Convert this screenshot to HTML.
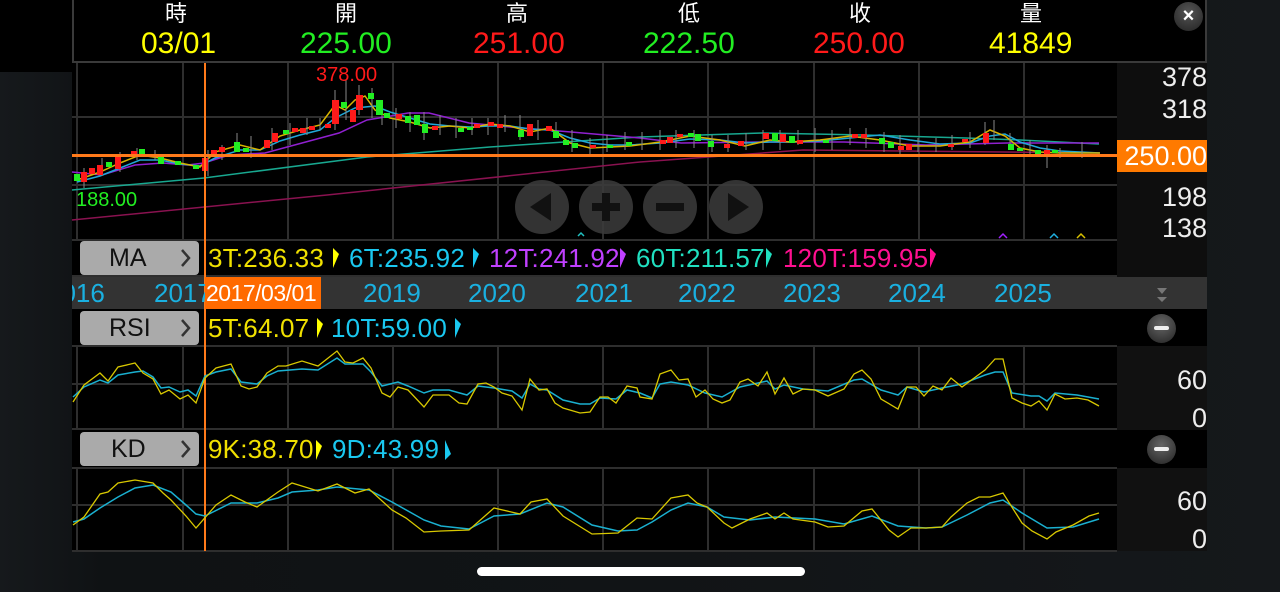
<!DOCTYPE html>
<html><head><meta charset="utf-8"><style>
*{margin:0;padding:0;box-sizing:border-box}
body{width:1280px;height:592px;overflow:hidden;background:#131619;font-family:"Liberation Sans","Noto Sans CJK TC",sans-serif;position:relative}
.abs{position:absolute}
.t{position:absolute;white-space:nowrap;line-height:1}
.l{font-size:26px;letter-spacing:0.2px;top:245px}
.d{font-size:26px;top:3px;color:#1ab0e0}
.ax{right:73px;font-size:27px;color:#eee}
</style></head><body>
<div class="abs" style="left:0;top:0;width:1280px;height:592px;background:linear-gradient(90deg,#16191c 0%,#0f1214 8%,#111416 50%,#15181b 100%)"></div>
<div class="abs" style="left:0;top:0;width:72px;height:72px;background:#000"></div>
<div class="abs" style="left:72px;top:0;width:1135px;height:551px;background:#000"></div>
<div class="abs" style="left:72px;top:0;width:1135px;height:63px;border:2px solid #3a3a3a;border-top:none"></div>
<div class="t" style="left:165px;top:3px;font-size:22px;color:#fff">時</div>
<div class="t" style="left:335px;top:3px;font-size:22px;color:#fff">開</div>
<div class="t" style="left:506px;top:3px;font-size:22px;color:#fff">高</div>
<div class="t" style="left:678px;top:3px;font-size:22px;color:#fff">低</div>
<div class="t" style="left:849px;top:3px;font-size:22px;color:#fff">收</div>
<div class="t" style="left:1020px;top:3px;font-size:22px;color:#fff">量</div>
<div class="t" style="left:141px;top:29px;font-size:30px;color:#ffff00">03/01</div>
<div class="t" style="left:300px;top:29px;font-size:30px;color:#22ee22">225.00</div>
<div class="t" style="left:473px;top:29px;font-size:30px;color:#ff1a1a">251.00</div>
<div class="t" style="left:643px;top:29px;font-size:30px;color:#22ee22">222.50</div>
<div class="t" style="left:813px;top:29px;font-size:30px;color:#ff1a1a">250.00</div>
<div class="t" style="left:989px;top:29px;font-size:30px;color:#ffff00">41849</div>
<div class="abs" style="left:1174px;top:2px;width:29px;height:29px;border-radius:50%;background:radial-gradient(circle at 50% 35%,#555,#222);color:#fff;font-size:20px;font-weight:bold;text-align:center;line-height:28px">×</div>

<div class="abs" style="left:1117px;top:63px;width:90px;height:214px;background:#0e0e0e"></div>
<div class="abs" style="left:1117px;top:346px;width:90px;height:84px;background:#111"></div>
<div class="abs" style="left:1117px;top:468px;width:90px;height:83px;background:#111"></div>
<div class="abs" style="left:72px;top:277px;width:1135px;height:32px;background:#333"></div>

<svg class="abs" style="left:0;top:0" width="1280" height="592">
<g stroke="#2e2e2e" stroke-width="2" fill="none">
<path d="M77 63V240M183 63V240M288 63V240M393 63V240M498 63V240M603 63V240M708 63V240M814 63V240M919 63V240M1024 63V240"/>
<path d="M72 117H1117M72 185H1117M72 240H1117M72 276H1117"/>
<path d="M77 346V429M183 346V429M288 346V429M393 346V429M498 346V429M603 346V429M708 346V429M814 346V429M919 346V429M1024 346V429"/>
<path d="M72 346H1117M72 384H1117M72 429H1117"/>
<path d="M77 468V551M183 468V551M288 468V551M393 468V551M498 468V551M603 468V551M708 468V551M814 468V551M919 468V551M1024 468V551"/>
<path d="M72 468H1117M72 505H1117M72 551H1117"/>
</g>
<polyline fill="none" stroke="#8a1250" stroke-width="1.5" points="72,220 327,195 640,162 803,150 1099,153"/>
<polyline fill="none" stroke="#18a890" stroke-width="1.5" points="72,190 204,178 367,157 490,147 640,137 762,133 864,135 966,138 1020,140 1099,144"/>
<polyline fill="none" stroke="#9020d0" stroke-width="1.5" points="72,172 102,175 135,165 163,163 188,165 204,163 229,155 265,153 302,143 339,133 367,120 408,113 429,113 469,123 510,127 571,132 640,138 681,143 762,142 844,142 926,145 1007,143 1099,143"/>
<polyline fill="none" stroke="#20a8d8" stroke-width="1.5" points="77,182 100,176 120,168 140,160 160,160 180,164 200,166 215,158 240,150 260,150 280,141 300,135 320,130 335,118 355,108 375,106 390,112 410,118 430,124 450,126 470,127 490,126 510,126 530,129 550,130 570,138 590,143 610,145 630,145 660,143 690,139 720,140 745,143 770,142 790,142 820,141 850,138 880,135 910,140 940,144 970,143 990,136 1005,134 1020,142 1040,148 1060,151 1100,153"/>
<polyline fill="none" stroke="#d8b400" stroke-width="1.5" points="77,180 100,172 120,163 140,155 160,158 180,163 200,167 215,152 240,145 260,150 280,136 300,130 320,125 335,105 345,110 355,100 365,96 375,110 390,118 410,122 430,128 450,126 470,128 490,124 510,126 530,132 550,128 570,143 590,148 610,147 630,146 660,142 690,136 720,140 745,146 770,140 790,142 820,140 850,136 880,140 910,146 940,146 970,142 990,130 1005,136 1020,148 1040,152 1060,153 1100,153"/>
<g stroke="#888" stroke-width="1">
<path d="M84 168V188M102 158V176M120 152V172M137 148V160M155 150V160M208 150V176M222 145V160M237 133V150M251 136V158M272 128V150M290 123V145M307 118V135M320 118V130M335 90V130M346 80V120M359 85V115M372 88V118M382 100V125M396 108V128M410 112V132M424 112V140M440 115V135M456 118V138M472 118V135M488 118V135M505 115V132M520 115V140M538 120V140M556 122V138M572 130V152M590 138V155M607 135V152M625 132V150M642 132V150M660 130V150M676 130V148M694 130V148M712 135V152M728 135V152M746 133V150M763 130V150M780 130V150M798 130V145M815 128V152M832 130V150M850 128V145M866 128V148M884 132V152M900 135V155M918 138V152M936 138V152M952 135V150M970 132V148M985 122V145M994 120V140M1010 133V150M1030 140V155M1047 145V168M1060 148V158M1082 142V158"/>
</g>
<g>
<rect x="74" y="174" width="6" height="7" fill="#22ee22"/><rect x="81" y="172" width="6" height="10" fill="#ff1a1a"/><rect x="89" y="168" width="6" height="6" fill="#ff1a1a"/><rect x="97" y="165" width="6" height="10" fill="#ff1a1a"/><rect x="106" y="162" width="6" height="5" fill="#22ee22"/><rect x="115" y="156" width="6" height="13" fill="#ff1a1a"/><rect x="131" y="151" width="6" height="4" fill="#ff1a1a"/><rect x="139" y="149" width="6" height="6" fill="#22ee22"/><rect x="158" y="157" width="6" height="7" fill="#22ee22"/><rect x="175" y="161" width="6" height="4" fill="#22ee22"/><rect x="193" y="165" width="6" height="4" fill="#22ee22"/><rect x="202" y="158" width="6" height="13" fill="#ff1a1a"/><rect x="211" y="150" width="6" height="6" fill="#ff1a1a"/><rect x="219" y="147" width="6" height="5" fill="#ff1a1a"/><rect x="234" y="142" width="6" height="10" fill="#22ee22"/><rect x="243" y="148" width="6" height="4" fill="#22ee22"/><rect x="264" y="140" width="6" height="8" fill="#ff1a1a"/><rect x="272" y="133" width="6" height="9" fill="#ff1a1a"/><rect x="283" y="130" width="6" height="4" fill="#22ee22"/><rect x="292" y="128" width="6" height="4" fill="#ff1a1a"/><rect x="300" y="128" width="6" height="5" fill="#ff1a1a"/><rect x="309" y="126" width="6" height="4" fill="#ff1a1a"/><rect x="325" y="124" width="6" height="4" fill="#ff1a1a"/><rect x="332" y="100" width="7" height="24" fill="#ff1a1a"/><rect x="341" y="102" width="6" height="6" fill="#22ee22"/><rect x="350" y="110" width="6" height="12" fill="#ff1a1a"/><rect x="356" y="95" width="7" height="15" fill="#ff1a1a"/><rect x="368" y="93" width="6" height="6" fill="#22ee22"/><rect x="376" y="100" width="7" height="15" fill="#22ee22"/><rect x="384" y="113" width="6" height="5" fill="#22ee22"/><rect x="396" y="114" width="6" height="5" fill="#ff1a1a"/><rect x="405" y="116" width="6" height="7" fill="#22ee22"/><rect x="414" y="115" width="6" height="10" fill="#22ee22"/><rect x="422" y="124" width="6" height="9" fill="#22ee22"/><rect x="432" y="126" width="6" height="4" fill="#ff1a1a"/><rect x="458" y="128" width="6" height="4" fill="#22ee22"/><rect x="467" y="127" width="6" height="3" fill="#22ee22"/><rect x="474" y="124" width="6" height="4" fill="#ff1a1a"/><rect x="488" y="122" width="6" height="4" fill="#ff1a1a"/><rect x="497" y="124" width="6" height="4" fill="#ff1a1a"/><rect x="518" y="130" width="6" height="7" fill="#22ee22"/><rect x="527" y="124" width="6" height="12" fill="#ff1a1a"/><rect x="546" y="126" width="6" height="5" fill="#ff1a1a"/><rect x="553" y="131" width="6" height="7" fill="#22ee22"/><rect x="563" y="140" width="6" height="5" fill="#22ee22"/><rect x="572" y="143" width="6" height="5" fill="#22ee22"/><rect x="590" y="145" width="6" height="3" fill="#ff1a1a"/><rect x="607" y="145" width="6" height="3" fill="#22ee22"/><rect x="626" y="142" width="6" height="4" fill="#22ee22"/><rect x="660" y="140" width="6" height="4" fill="#ff1a1a"/><rect x="667" y="137" width="6" height="6" fill="#ff1a1a"/><rect x="677" y="134" width="6" height="3" fill="#ff1a1a"/><rect x="688" y="133" width="6" height="4" fill="#22ee22"/><rect x="695" y="134" width="6" height="7" fill="#22ee22"/><rect x="708" y="141" width="6" height="6" fill="#22ee22"/><rect x="724" y="144" width="6" height="4" fill="#ff1a1a"/><rect x="738" y="141" width="6" height="5" fill="#ff1a1a"/><rect x="763" y="133" width="6" height="6" fill="#ff1a1a"/><rect x="772" y="133" width="6" height="8" fill="#22ee22"/><rect x="780" y="134" width="6" height="8" fill="#ff1a1a"/><rect x="789" y="136" width="6" height="7" fill="#22ee22"/><rect x="797" y="140" width="6" height="4" fill="#ff1a1a"/><rect x="823" y="140" width="6" height="3" fill="#22ee22"/><rect x="852" y="134" width="6" height="4" fill="#ff1a1a"/><rect x="861" y="134" width="6" height="4" fill="#ff1a1a"/><rect x="879" y="138" width="6" height="6" fill="#22ee22"/><rect x="888" y="142" width="6" height="6" fill="#22ee22"/><rect x="898" y="146" width="6" height="4" fill="#ff1a1a"/><rect x="906" y="144" width="6" height="6" fill="#ff1a1a"/><rect x="948" y="144" width="6" height="3" fill="#ff1a1a"/><rect x="962" y="139" width="6" height="3" fill="#ff1a1a"/><rect x="983" y="133" width="6" height="10" fill="#ff1a1a"/><rect x="1008" y="144" width="6" height="6" fill="#22ee22"/><rect x="1017" y="148" width="6" height="3" fill="#22ee22"/><rect x="1035" y="150" width="6" height="4" fill="#22ee22"/><rect x="1044" y="150" width="6" height="4" fill="#ff1a1a"/><rect x="1052" y="150" width="6" height="3" fill="#22ee22"/>
</g>
<rect x="72" y="154" width="1045" height="3" fill="#ff7a1a"/>
<rect x="204" y="63" width="2" height="488" fill="#ff7a1a"/>
<g fill="#3c3c3c" opacity="0.85">
<ellipse cx="542" cy="207" rx="27" ry="27"/><ellipse cx="606" cy="207" rx="27" ry="27"/><ellipse cx="670" cy="207" rx="27" ry="27"/><ellipse cx="736" cy="207" rx="27" ry="27"/>
</g>
<g fill="#111">
<path d="M551 193V221L530 207Z"/><rect x="592" y="203" width="28" height="8"/><rect x="602" y="193" width="8" height="28"/><rect x="656" y="203" width="28" height="8"/><path d="M728 193V221L749 207Z"/>
</g>
<g fill="none" stroke-width="1.5"><path d="M578 236L581 233L584 236" stroke="#20c0c0"/><path d="M999 238L1003 234L1007 238" stroke="#a020ff"/><path d="M1050 238L1054 234L1058 238" stroke="#20b0e0"/><path d="M1077 238L1081 234L1085 238" stroke="#d8c000"/></g>
<polyline fill="none" stroke="#1ab0d0" stroke-width="1.5" points="73,397 84,387 100,380 108,383 118,375 135,372 143,371 153,377 161,388 169,387 180,392 188,390 196,396 205,376 216,372 231,369 241,382 257,384 267,376 278,371 302,369 318,370 337,358 345,364 363,364 371,372 382,386 398,382 408,386 424,393 433,390 449,390 467,395 478,386 494,388 512,391 522,398 530,384 539,389 547,390 563,400 580,404 590,404 600,398 616,399 627,390 640,393 652,398 660,384 671,382 688,385 705,393 722,397 740,387 767,381 775,389 784,385 803,389 828,391 854,380 862,379 881,390 898,395 907,387 924,392 942,388 962,384 985,375 995,372 1003,372 1012,393 1031,396 1039,396 1047,401 1055,393 1077,395 1099,399"/>
<polyline fill="none" stroke="#d8c800" stroke-width="1.3" points="73,402 84,385 100,373 108,381 118,367 135,363 143,373 153,379 161,394 169,390 180,399 188,395 196,403 205,378 216,368 231,364 241,386 249,389 257,387 267,373 278,366 286,366 302,361 318,366 337,351 345,362 353,363 363,358 371,368 382,393 390,397 398,387 408,390 424,407 433,395 449,395 459,403 467,404 478,384 486,383 494,387 502,393 512,396 522,410 530,379 539,390 547,389 555,403 563,408 580,413 590,412 600,397 608,397 616,403 627,386 637,388 640,397 652,399 660,374 671,370 679,380 688,379 696,397 705,390 713,399 722,403 730,400 740,382 748,379 758,386 767,372 775,394 784,378 793,394 803,389 815,390 828,396 844,389 854,374 862,370 871,379 881,399 898,409 907,387 916,387 924,396 933,386 942,390 951,378 962,387 985,370 995,359 1003,359 1012,398 1022,403 1031,406 1039,401 1047,410 1055,394 1065,399 1077,398 1088,400 1099,406"/>
<polyline fill="none" stroke="#1ab0d0" stroke-width="1.5" points="73,522 84,519 100,508 118,497 135,488 153,485 171,492 186,505 196,514 205,516 231,503 257,503 278,498 292,492 318,490 337,487 369,490 392,502 424,520 441,526 469,529 494,516 520,514 547,503 563,507 592,525 618,531 637,530 652,522 671,510 688,503 707,507 724,517 750,520 775,517 815,519 844,524 872,516 898,526 926,528 942,527 967,515 990,503 1003,500 1022,513 1047,528 1073,527 1099,519"/>
<polyline fill="none" stroke="#d8c800" stroke-width="1.3" points="73,525 84,517 100,494 108,492 118,483 135,480 153,483 163,493 171,500 186,516 196,528 216,505 231,495 245,502 257,507 278,492 292,483 318,491 337,484 355,493 369,489 392,510 406,518 424,532 441,531 469,530 494,508 520,514 531,502 547,499 563,516 592,534 618,533 637,518 652,519 671,498 688,495 697,503 707,507 724,523 732,528 750,519 767,513 775,519 784,513 793,519 815,522 828,527 844,526 862,511 872,509 889,530 898,537 911,528 926,528 942,527 951,517 967,503 979,497 990,497 1003,493 1022,523 1032,531 1047,539 1056,532 1073,525 1089,516 1099,513"/>
<g fill="#ffff00"><path d="M333 248V268L339 254Z"/><path d="M317 318V338L323 324Z"/><path d="M316 440V460L322 446Z"/></g>
<g fill="#1ac8f0"><path d="M473 248V268L479 254Z"/><path d="M455 318V338L461 324Z"/><path d="M445 440V460L451 454Z"/></g>
<path d="M620 248V268L626 254Z" fill="#c040ff"/><path d="M766 248V268L772 254Z" fill="#20e0c0"/><path d="M930 248V268L936 254Z" fill="#ff1090"/>
<path d="M1157 288H1167L1162 294ZM1157 297H1167L1162 302Z" fill="#777"/>
</svg>

<div class="t" style="left:316px;top:65px;font-size:20px;color:#ff1a1a">378.00</div>
<div class="t" style="left:76px;top:190px;font-size:20px;color:#22ee22">188.00</div>
<div class="t ax" style="top:64px">378</div>
<div class="t ax" style="top:96px">318</div>
<div class="abs" style="left:1117px;top:140px;width:90px;height:32px;background:#ff7a00"></div>
<div class="t" style="right:73px;top:143px;font-size:27px;color:#fff">250.00</div>
<div class="t ax" style="top:184px">198</div>
<div class="t ax" style="top:215px">138</div>
<div class="t ax" style="top:367px">60</div>
<div class="t ax" style="top:405px">0</div>
<div class="t ax" style="top:488px">60</div>
<div class="t ax" style="top:526px">0</div>

<div class="abs" style="left:80px;top:241px;width:119px;height:34px;background:#aaa;border-radius:4px"></div>
<div class="t" style="left:109px;top:246px;font-size:25px;color:#111">MA</div>
<div class="abs" style="left:80px;top:311px;width:119px;height:34px;background:#aaa;border-radius:4px"></div>
<div class="t" style="left:109px;top:316px;font-size:25px;color:#111">RSI</div>
<div class="abs" style="left:80px;top:432px;width:119px;height:34px;background:#aaa;border-radius:4px"></div>
<div class="t" style="left:111px;top:437px;font-size:25px;color:#111">KD</div>
<svg class="abs" style="left:0;top:0" width="1280" height="592"><g fill="none" stroke="#333" stroke-width="2.5"><path d="M182 250L189 258L182 266M182 320L189 328L182 336M182 441L189 449L182 457"/></g></svg>

<div class="t l" style="left:208px;color:#f0e000">3T:236.33</div>
<div class="t l" style="left:349px;color:#1ac8f0">6T:235.92</div>
<div class="t l" style="left:489px;color:#c040ff">12T:241.92</div>
<div class="t l" style="left:636px;color:#20e0c0">60T:211.57</div>
<div class="t l" style="left:783px;color:#ff1090">120T:159.95</div>
<div class="t l" style="left:208px;top:315px;color:#f0e000">5T:64.07</div>
<div class="t l" style="left:331px;top:315px;color:#1ac8f0">10T:59.00</div>
<div class="t l" style="left:208px;top:436px;color:#f0e000">9K:38.70</div>
<div class="t l" style="left:332px;top:436px;color:#1ac8f0">9D:43.99</div>

<div class="abs" style="left:72px;top:277px;width:1045px;height:32px;overflow:hidden">
<div class="t d" style="left:-25px">2016</div>
<div class="t d" style="left:82px">2017</div>
<div class="abs" style="left:133px;top:0;width:116px;height:32px;background:#ff6a00"></div>
<div class="t" style="left:134px;top:5px;font-size:23px;letter-spacing:-0.5px;color:#fff">2017/03/01</div>
<div class="t d" style="left:291px">2019</div>
<div class="t d" style="left:396px">2020</div>
<div class="t d" style="left:503px">2021</div>
<div class="t d" style="left:606px">2022</div>
<div class="t d" style="left:711px">2023</div>
<div class="t d" style="left:816px">2024</div>
<div class="t d" style="left:922px">2025</div>
</div>

<div class="abs" style="left:1147px;top:314px;width:29px;height:29px;border-radius:50%;background:radial-gradient(circle at 50% 35%,#666,#222)"><div class="abs" style="left:7px;top:12px;width:15px;height:4px;background:#eee;border-radius:2px"></div></div>
<div class="abs" style="left:1147px;top:435px;width:29px;height:29px;border-radius:50%;background:radial-gradient(circle at 50% 35%,#666,#222)"><div class="abs" style="left:7px;top:12px;width:15px;height:4px;background:#eee;border-radius:2px"></div></div>

<div class="abs" style="left:477px;top:567px;width:328px;height:9px;background:#fff;border-radius:5px"></div>
</body></html>
